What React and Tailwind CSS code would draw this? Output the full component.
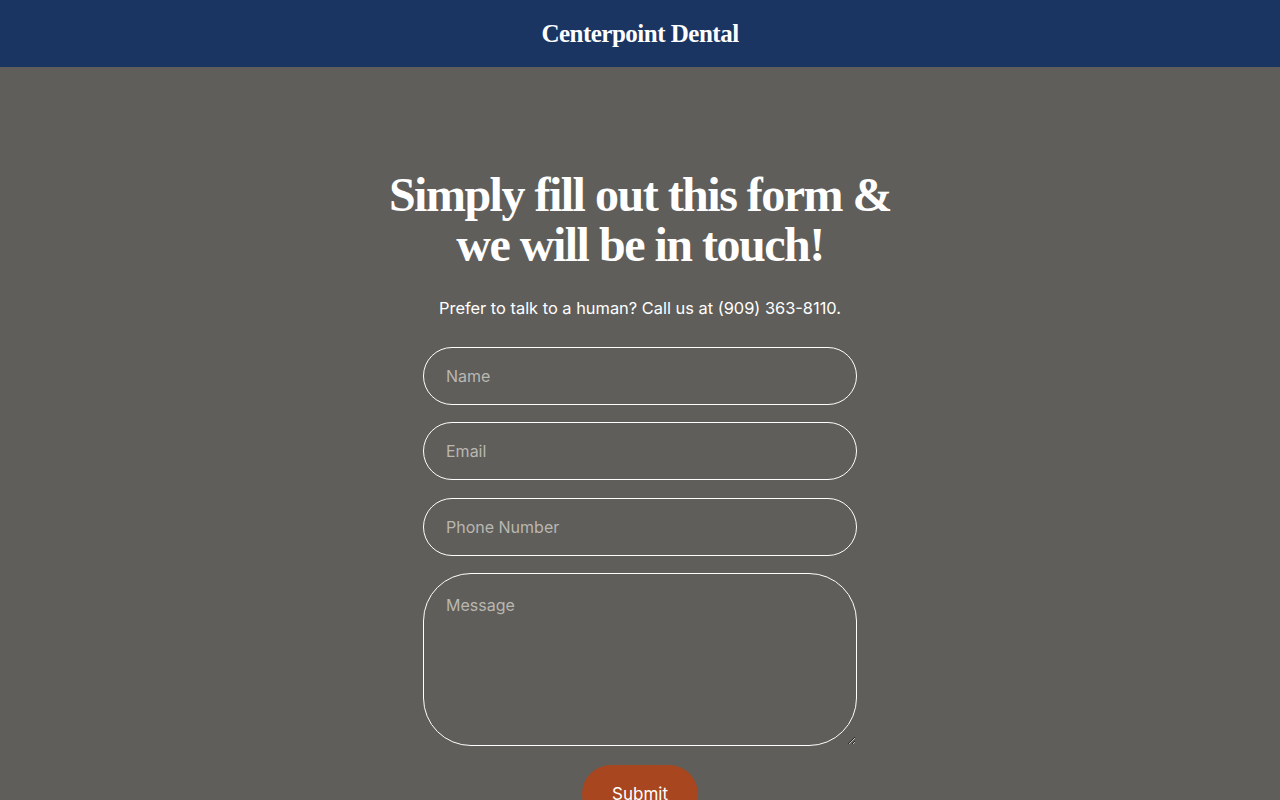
import React, { useState } from "react";

const serif = { fontFamily: '"Liberation Serif", "DejaVu Serif", serif' };

export default function App() {
  const [form, setForm] = useState({ name: "", email: "", phone: "", message: "" });
  const update = (key) => (e) => setForm({ ...form, [key]: e.target.value });

  const field =
    "w-full h-[58px] px-[22px] rounded-full border border-white bg-transparent text-[16px] text-white placeholder:text-[#b9b7b1] outline-none";

  return (
    <div className="min-h-screen bg-[#5f5e5a]" style={{ fontFamily: 'Inter, "Liberation Sans", sans-serif' }}>
      <header className="h-[67px] bg-[#1b3563] flex items-center justify-center">
        <h1 className="text-[25px] font-bold text-white tracking-[-0.5px]" style={serif}>
          Centerpoint Dental
        </h1>
      </header>

      <main className="flex flex-col items-center pt-[103px] pb-10">
        <h2
          className="text-[48px] leading-[50px] font-bold text-white text-center tracking-[-1.5px]"
          style={serif}
        >
          Simply fill out this form &amp;
          <br />
          we will be in touch!
        </h2>

        <p className="mt-[26px] text-[16.4px] text-white">
          Prefer to talk to a human? Call us at (909) 363-8110.
        </p>

        <form className="mt-[26px] w-[434px] flex flex-col gap-[17.5px]" onSubmit={(e) => e.preventDefault()}>
          <input className={field} placeholder="Name" value={form.name} onChange={update("name")} />
          <input className={field} placeholder="Email" value={form.email} onChange={update("email")} />
          <input className={field} placeholder="Phone Number" value={form.phone} onChange={update("phone")} />
          <textarea
            className="w-full h-[173px] px-[22px] pt-[19px] rounded-[48px] border border-white bg-transparent text-[16px] text-white placeholder:text-[#b9b7b1] outline-none resize-y"
            placeholder="Message"
            value={form.message}
            onChange={update("message")}
          />
          <div className="flex justify-center mt-[1px]">
            <button type="submit" className="w-[116px] h-[58px] rounded-full bg-[#a8471f] text-white text-[17px] pt-[2px]">
              Submit
            </button>
          </div>
        </form>
      </main>
    </div>
  );
}
